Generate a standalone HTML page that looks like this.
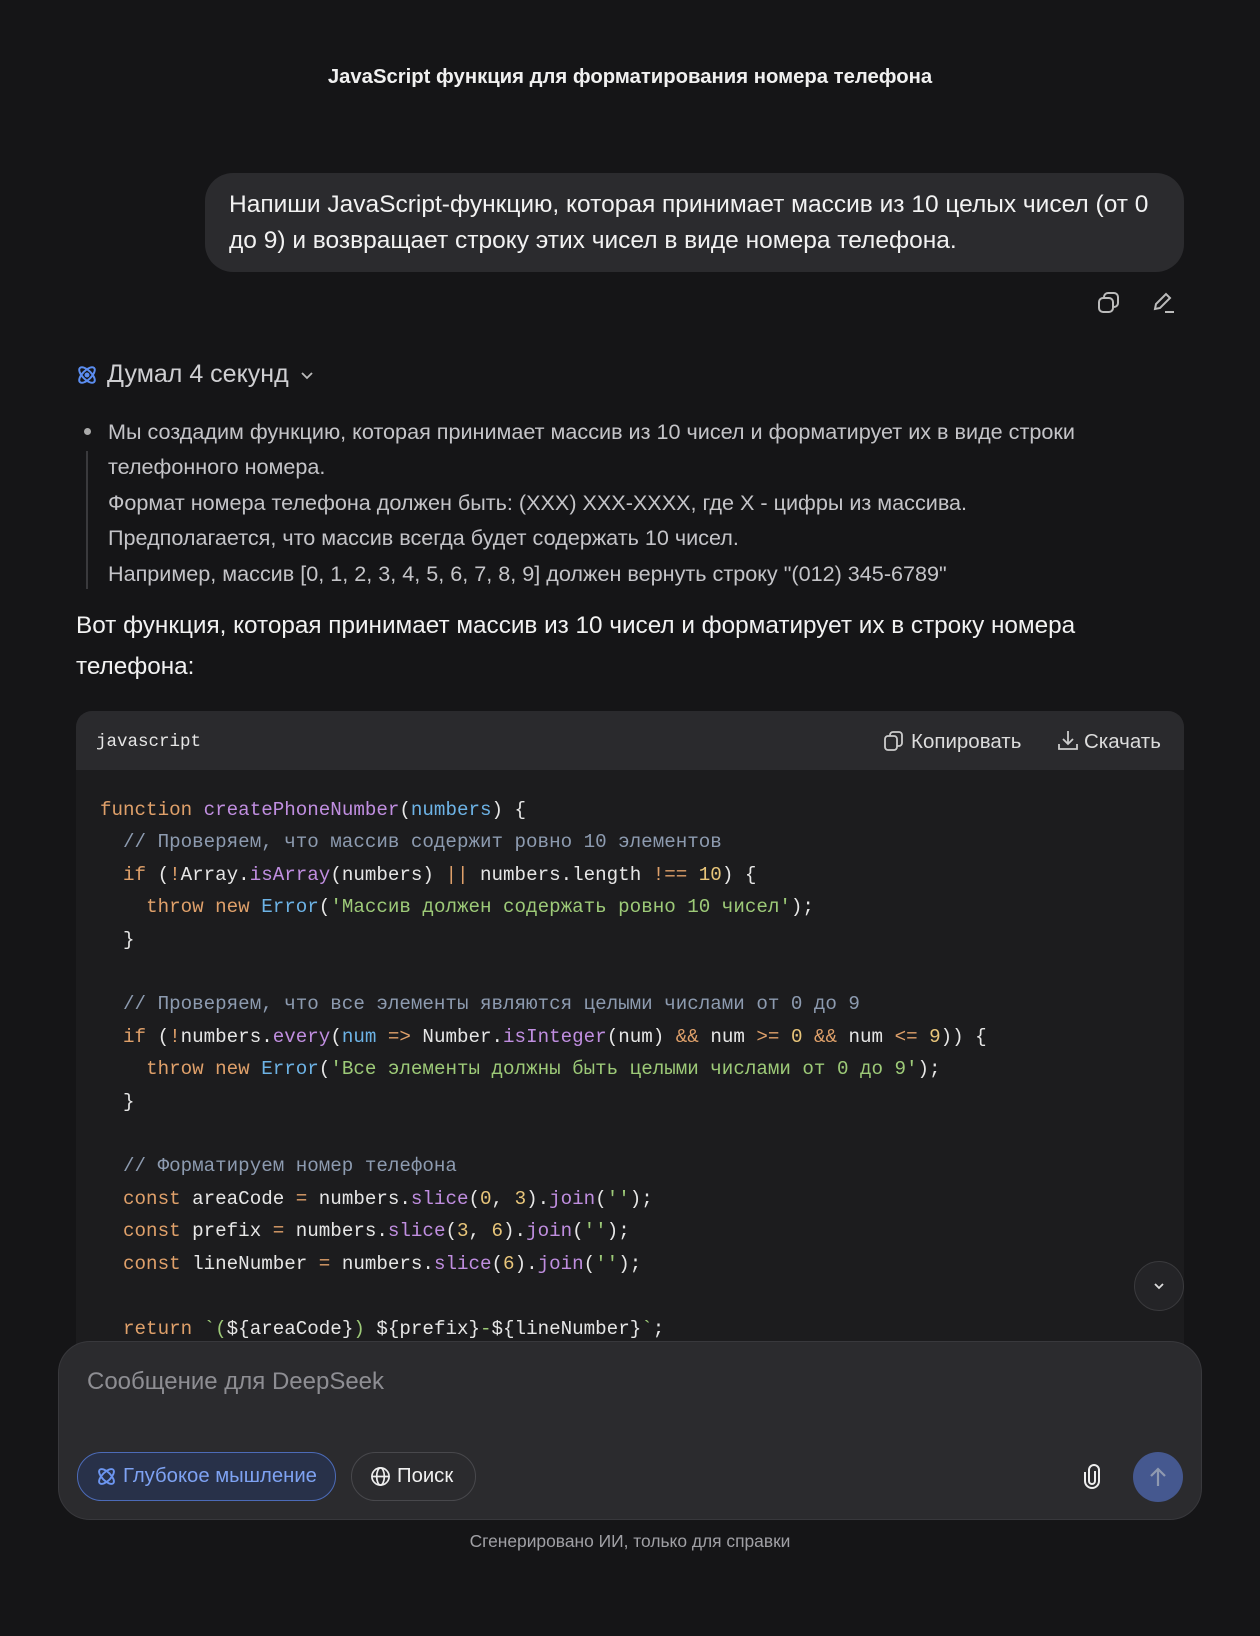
<!DOCTYPE html>
<html><head><meta charset="utf-8"><style>
*{margin:0;padding:0;box-sizing:border-box}
body{width:1260px;height:1636px;background:#151517;color:#e8e8ea;font-family:"Liberation Sans","Noto Sans CJK SC",sans-serif;position:relative;overflow:hidden}
.a{position:absolute;white-space:nowrap}
.title{top:66px;left:0;width:1260px;text-align:center;font-size:20.3px;font-weight:bold;color:#f0f0f0}
.bubble{left:205px;top:173px;width:979px;height:99px;background:#2b2b2e;border-radius:28px}
.bt{left:229px;font-size:24.5px;color:#f2f2f2}
.think{left:107px;top:360px;font-size:25px;color:#cfcfd2}
.bl{left:108px;font-size:21.6px;color:#c4c4c8}
.para{left:76px;font-size:24.3px;color:#f2f2f2}
.code{left:76px;top:711px;width:1108px;height:700px;background:#1c1c1e;border-radius:16px;overflow:hidden}
.ch{height:59px;background:#2a2a2d}
pre{position:absolute;left:24px;top:83px;font-family:"Liberation Mono",monospace;font-size:19.2px;line-height:32.4px;color:#e6e6e6}
.k{color:#dfa06a}.f{color:#c08ee0}.p{color:#6db3e6}.c{color:#8d9bb0}.s{color:#9dca78}.n{color:#e8c57a}
.inp{left:58px;top:1341px;width:1144px;height:179px;background:#2b2b2e;border:1px solid #38383c;border-radius:32px}
</style></head><body>
<div class="a title">JavaScript функция для форматирования номера телефона</div>
<div class="a bubble"></div>
<div class="a bt" style="top:191px">Напиши JavaScript-функцию, которая принимает массив из 10 целых чисел (от 0</div>
<div class="a bt" style="top:227px">до 9) и возвращает строку этих чисел в виде номера телефона.</div>
<svg class="a" style="left:1096px;top:290px" width="26" height="26" viewBox="0 0 26 26" fill="none" stroke="#bbb" stroke-width="2"><rect x="3" y="8" width="14" height="14" rx="4"/><path d="M8 8V7a4 4 0 0 1 4-4h6a4 4 0 0 1 4 4v6a4 4 0 0 1-4 4h-1"/></svg>
<svg class="a" style="left:1151px;top:290px" width="26" height="26" viewBox="0 0 26 26" fill="none" stroke="#bbb" stroke-width="2"><path d="M4 19l1-5L15 4l4 4-10 10-5 1z"/><path d="M14 22h9"/></svg>
<svg class="a" style="left:76px;top:364px" width="22" height="22" viewBox="0 0 22 22" fill="none" stroke="#5b8df0" stroke-width="2"><ellipse cx="11" cy="11" rx="10" ry="4.5" transform="rotate(45 11 11)"/><ellipse cx="11" cy="11" rx="10" ry="4.5" transform="rotate(-45 11 11)"/><circle cx="11" cy="11" r="1.5" fill="#5b8df0"/></svg>
<div class="a think">Думал 4 секунд</div>
<svg class="a" style="left:300px;top:368px" width="14" height="14" viewBox="0 0 14 14" fill="none" stroke="#bbb" stroke-width="1.8"><path d="M2 5l5 5 5-5"/></svg>
<div class="a" style="left:84px;top:428px;width:7px;height:7px;border-radius:50%;background:#aaa"></div>
<div class="a" style="left:86px;top:451px;width:2px;height:138px;background:#3a3a3d"></div>
<div class="a bl" style="top:419px">Мы создадим функцию, которая принимает массив из 10 чисел и форматирует их в виде строки</div>
<div class="a bl" style="top:454px">телефонного номера.</div>
<div class="a bl" style="top:490px">Формат номера телефона должен быть: (XXX) XXX-XXXX, где X - цифры из массива.</div>
<div class="a bl" style="top:525px">Предполагается, что массив всегда будет содержать 10 чисел.</div>
<div class="a bl" style="top:561px">Например, массив [0, 1, 2, 3, 4, 5, 6, 7, 8, 9] должен вернуть строку "(012) 345-6789"</div>
<div class="a para" style="top:612px">Вот функция, которая принимает массив из 10 чисел и форматирует их в строку номера</div>
<div class="a para" style="top:653px">телефона:</div>
<div class="a code"><div class="ch"></div>
<pre><span class="k">function</span> <span class="f">createPhoneNumber</span>(<span class="p">numbers</span>) {
  <span class="c">// Проверяем, что массив содержит ровно 10 элементов</span>
  <span class="k">if</span> (<span class="k">!</span>Array.<span class="f">isArray</span>(numbers) <span class="k">||</span> numbers.length <span class="k">!==</span> <span class="n">10</span>) {
    <span class="k">throw new</span> <span class="p">Error</span>(<span class="s">'Массив должен содержать ровно 10 чисел'</span>);
  }

  <span class="c">// Проверяем, что все элементы являются целыми числами от 0 до 9</span>
  <span class="k">if</span> (<span class="k">!</span>numbers.<span class="f">every</span>(<span class="p">num</span> <span class="k">=&gt;</span> Number.<span class="f">isInteger</span>(num) <span class="k">&amp;&amp;</span> num <span class="k">&gt;=</span> <span class="n">0</span> <span class="k">&amp;&amp;</span> num <span class="k">&lt;=</span> <span class="n">9</span>)) {
    <span class="k">throw new</span> <span class="p">Error</span>(<span class="s">'Все элементы должны быть целыми числами от 0 до 9'</span>);
  }

  <span class="c">// Форматируем номер телефона</span>
  <span class="k">const</span> areaCode <span class="k">=</span> numbers.<span class="f">slice</span>(<span class="n">0</span>, <span class="n">3</span>).<span class="f">join</span>(<span class="s">''</span>);
  <span class="k">const</span> prefix <span class="k">=</span> numbers.<span class="f">slice</span>(<span class="n">3</span>, <span class="n">6</span>).<span class="f">join</span>(<span class="s">''</span>);
  <span class="k">const</span> lineNumber <span class="k">=</span> numbers.<span class="f">slice</span>(<span class="n">6</span>).<span class="f">join</span>(<span class="s">''</span>);

  <span class="k">return</span> <span class="s">`(</span>${areaCode}<span class="s">)</span> ${prefix}<span class="s">-</span>${lineNumber}<span class="s">`</span>;
}</pre>
</div>
<div class="a" style="left:96px;top:732px;font-family:'Liberation Mono',monospace;font-size:17.5px;color:#e6e6e6">javascript</div>
<svg class="a" style="left:883px;top:730px" width="22" height="22" viewBox="0 0 22 22" fill="none" stroke="#ccc" stroke-width="1.8"><rect x="2" y="6" width="12" height="14" rx="3"/><path d="M7 6V5a3 3 0 0 1 3-3h6a3 3 0 0 1 3 3v8a3 3 0 0 1-3 3h-2"/></svg>
<div class="a" style="left:911px;top:730px;font-size:20.5px;color:#dcdcdc">Копировать</div>
<svg class="a" style="left:1057px;top:729px" width="22" height="22" viewBox="0 0 22 22" fill="none" stroke="#ccc" stroke-width="1.8"><path d="M11 2v13M6 10l5 5 5-5M2 15v5h18v-5"/></svg>
<div class="a" style="left:1084px;top:730px;font-size:20.5px;color:#dcdcdc">Скачать</div>
<div class="a" style="left:1134px;top:1261px;width:50px;height:50px;border-radius:50%;background:#242427;border:1px solid #3a3a3d"></div>
<svg class="a" style="left:1152px;top:1279px" width="14" height="14" viewBox="0 0 14 14" fill="none" stroke="#ddd" stroke-width="1.8"><path d="M3 5l4 4 4-4"/></svg>
<div class="a inp"></div>
<div class="a" style="left:87px;top:1368px;font-size:24px;color:#8e8e93">Сообщение для DeepSeek</div>
<div class="a" style="left:77px;top:1452px;width:259px;height:49px;border-radius:25px;background:#283149;border:1.5px solid #4c6bb8"></div>
<svg class="a" style="left:96px;top:1466px" width="21" height="21" viewBox="0 0 22 22" fill="none" stroke="#6c95f0" stroke-width="2"><ellipse cx="11" cy="11" rx="10" ry="4.5" transform="rotate(45 11 11)"/><ellipse cx="11" cy="11" rx="10" ry="4.5" transform="rotate(-45 11 11)"/></svg>
<div class="a" style="left:123px;top:1465px;font-size:20.3px;color:#7ea2f2">Глубокое мышление</div>
<div class="a" style="left:351px;top:1452px;width:125px;height:49px;border-radius:25px;border:1.5px solid #48484c"></div>
<svg class="a" style="left:370px;top:1466px" width="21" height="21" viewBox="0 0 22 22" fill="none" stroke="#eee" stroke-width="1.8"><circle cx="11" cy="11" r="9"/><ellipse cx="11" cy="11" rx="4" ry="9"/><path d="M2 11h18"/></svg>
<div class="a" style="left:397px;top:1465px;font-size:20.3px;color:#f0f0f0">Поиск</div>
<svg class="a" style="left:1082px;top:1464px" width="20" height="26" viewBox="0 0 20 26" fill="none" stroke="#eee" stroke-width="2"><path d="M13 7v10a3 3 0 0 1-6 0V6a5 5 0 0 1 10 0v11a7 7 0 0 1-14 0V8"/></svg>
<div class="a" style="left:1133px;top:1452px;width:50px;height:50px;border-radius:50%;background:#45588f"></div>
<svg class="a" style="left:1146px;top:1465px" width="24" height="24" viewBox="0 0 24 24" fill="none" stroke="#8f99b0" stroke-width="2.2"><path d="M12 21V4M5 11l7-7 7 7"/></svg>
<div class="a" style="left:0;top:1531px;width:1260px;text-align:center;font-size:17.4px;color:#a0a0a5">Сгенерировано ИИ, только для справки</div>
</body></html>
